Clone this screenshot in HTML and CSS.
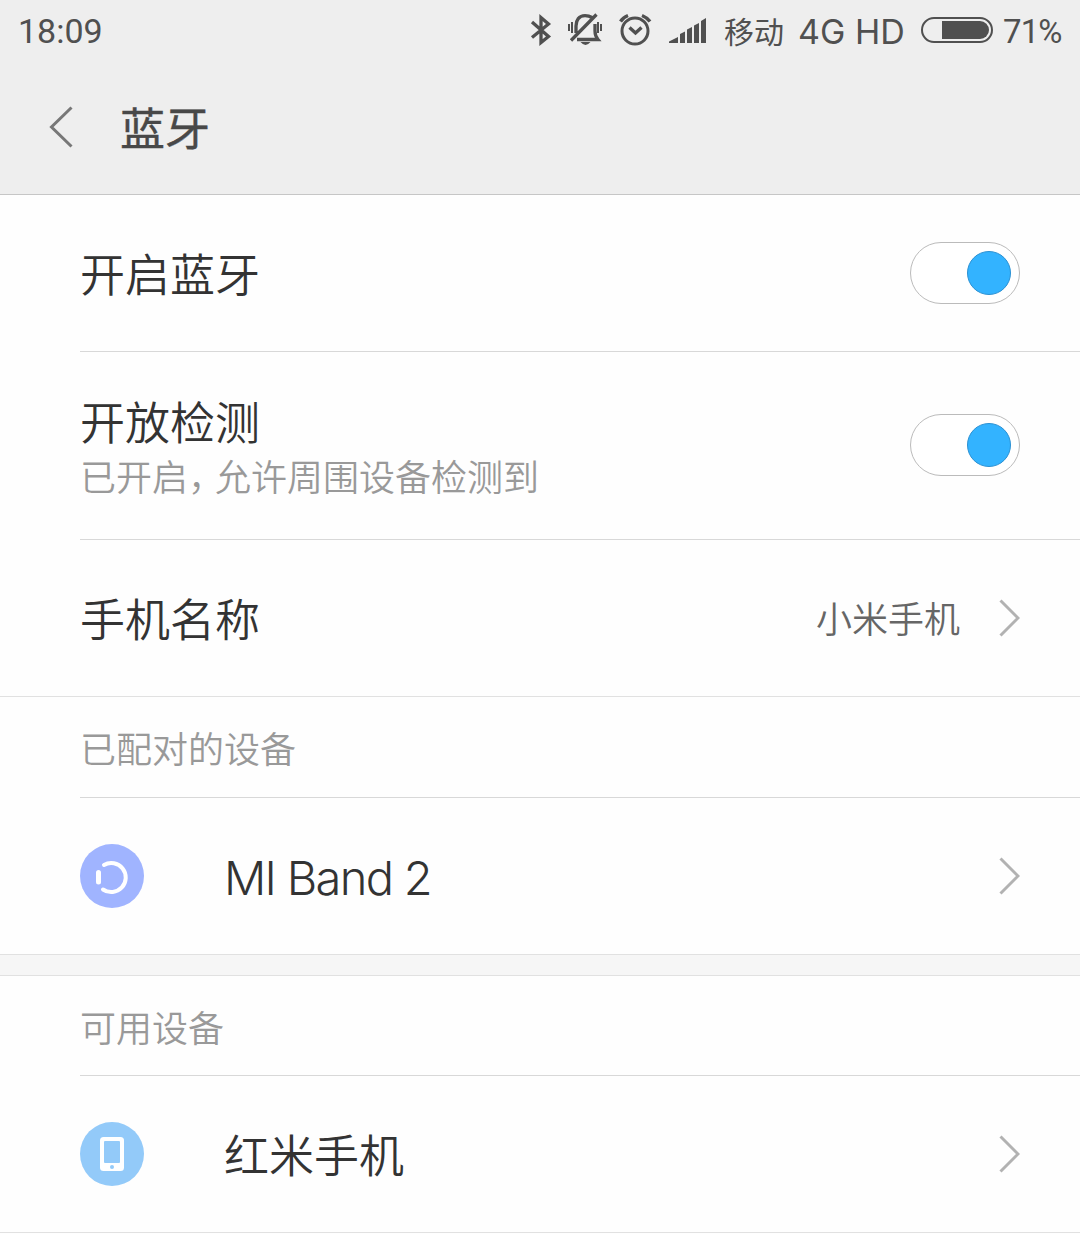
FILE: index.html
```html
<!DOCTYPE html>
<html lang="zh-CN">
<head>
<meta charset="utf-8">
<title>蓝牙</title>
<link rel="stylesheet" href="styles.css">
</head>
<body>
<header class="header">
  <div class="status">
    <span class="clock">18:09</span>
    <svg class="status-icons" width="190" height="60" viewBox="0 0 190 60" fill="none" stroke="#505050" stroke-width="3">
      <path stroke-width="3.300" d="M2 22 18.500 36.500 11 42.500V17.500L18.500 24 2 37.500"/>
      <path stroke-width="3.300" d="M46 33V26C46 20 49 15.700 55 15.700Q59 15.700 62 17.500M65 24V31Q65 36 68 39.500H47M41 40.500 66.500 14.500"/>
      <path stroke-width="2" d="M39 24v7M42 22v11M68 22v11M71 24v7"/>
      <path d="M50.500 42H60.500Q55.500 48 50.500 42Z" fill="#505050" stroke="none"/>
      <circle cx="105" cy="31" r="13"/>
      <path stroke-width="3.400" d="M99.500 27.500 105.500 33 111.500 27.500"/>
      <path stroke-width="3.400" d="M90.500 21.500Q93 17.500 98 15.500M112 15.500Q117 17.500 120 21.500"/>
      <path fill="#505050" stroke="none" d="M139 41.500 148 37V43H139ZM150 34 155 31.500V43H150ZM157 29.500 162 27V43H157ZM164 25.500 169 23V43H164ZM171 21 176 18V43H171Z"/>
    </svg>
    <span class="carrier">移动</span>
    <span class="network">4G HD</span>
    <span class="battery"><span class="battery-level"></span></span>
    <span class="percent">71%</span>
  </div>
  <div class="titlebar">
    <svg class="back" width="26" height="42" viewBox="0 0 26 42" fill="none" stroke="#777" stroke-width="3"><path d="M23.500 1.500 3.500 21 23.500 40.500"/></svg>
    <h1 class="title">蓝牙</h1>
  </div>
</header>
<main>
  <div class="row">
    <div class="label">开启蓝牙</div>
    <div class="switch"><span class="knob"></span></div>
  </div>
  <div class="row row-tall">
    <div class="texts">
      <div class="label">开放检测</div>
      <div class="note">已开启<span class="comma">，</span>允许周围设备检测到</div>
    </div>
    <div class="switch"><span class="knob"></span></div>
  </div>
  <div class="row row-last">
    <div class="label">手机名称</div>
    <div class="value">小米手机</div>
    <svg class="chevron" width="22" height="38" viewBox="0 0 22 38"><path d="M2.500 1.500 20 19 2.500 36.500"/></svg>
  </div>
  <h2 class="section">已配对的设备</h2>
  <div class="row row-last">
    <svg class="device" width="64" height="64" viewBox="0 0 64 64" fill="none" stroke="#fff" stroke-linecap="round">
      <circle cx="32" cy="32" r="32" fill="#a0b4ff" stroke="none"/>
      <path stroke-width="4" d="M24 21A14.500 14.500 0 1 1 23 45.500"/>
      <path stroke-width="5" d="M18.500 28.500V38"/>
    </svg>
    <div class="label latin">MI Band 2</div>
    <svg class="chevron" width="22" height="38" viewBox="0 0 22 38"><path d="M2.500 1.500 20 19 2.500 36.500"/></svg>
  </div>
  <div class="gap"></div>
  <h2 class="section section-second">可用设备</h2>
  <div class="row row-last">
    <svg class="device" width="64" height="64" viewBox="0 0 64 64">
      <circle cx="32" cy="32" r="32" fill="#93caf9"/>
      <rect x="20" y="15" width="24" height="34" rx="3.500" fill="#fff"/>
      <rect x="24" y="19" width="16" height="22" rx="1" fill="#93caf9"/>
      <circle cx="32" cy="45" r="2" fill="#93caf9"/>
    </svg>
    <div class="label">红米手机</div>
    <svg class="chevron" width="22" height="38" viewBox="0 0 22 38"><path d="M2.500 1.500 20 19 2.500 36.500"/></svg>
  </div>
</main>
</body>
</html>
```

FILE: styles.css
```css
* { box-sizing: border-box; }
body {
  margin: 0;
  height: 1234px;
  overflow: hidden;
  background: #fefefe;
  color: #333;
  font-family: "Noto Sans CJK SC", sans-serif;
  font-weight: 350;
}
.header {
  height: 195px;
  background: #eee;
  border-bottom: 1px solid #c6c6c6;
}
.status {
  display: flex;
  align-items: center;
  height: 60px;
  padding: 0 18px;
  color: #505050;
  font: 400 34px/60px Roboto, "Noto Sans CJK SC", sans-serif;
  white-space: nowrap;
}
.clock { padding-top: 2px; }
.status-icons { position: absolute; left: 530px; top: 0; }
.carrier {
  margin-left: auto;
  width: 74px;
  font: 400 30px/60px "Noto Sans CJK SC", sans-serif;
}
.network {
  width: 123px;
  padding-top: 3px;
  font-family: Inter, sans-serif;
}
.battery {
  width: 72px;
  height: 26px;
  padding: 2px;
  border: 2px solid #505050;
  border-radius: 13px;
  display: flex;
  justify-content: flex-end;
}
.battery-level {
  width: 47px;
  background: #505050;
  border-radius: 0 9px 9px 0;
}
.percent {
  width: 59px;
  margin-left: 10px;
  padding-top: 3px;
  font-size: 33px;
  letter-spacing: -.9px;
}
.titlebar {
  display: flex;
  align-items: center;
  height: 134px;
  padding-left: 48px;
}
.title {
  margin: 0 0 0 46px;
  color: #484848;
  font-size: 45px;
  font-weight: 400;
  line-height: 60px;
  -webkit-text-stroke: .4px #484848;
}
.row {
  display: flex;
  align-items: center;
  height: 157px;
  margin-left: 80px;
  padding-right: 60px;
  border-bottom: 1px solid #d8d8d8;
}
.row-tall { height: 188px; padding-bottom: 2px; }
.row-last {
  margin-left: 0;
  padding-left: 80px;
  border-color: #e1e1e1;
}
.label { font-size: 45px; line-height: 60px; }
.note {
  color: #999;
  font-size: 36px;
  line-height: 48px;
}
.comma { margin-right: 9px; font-feature-settings: "halt"; }
.switch {
  width: 110px;
  height: 62px;
  margin-left: auto;
  padding: 8px;
  display: flex;
  justify-content: flex-end;
  border: 1px solid #bbb;
  border-radius: 31px;
  background: #fff;
}
.knob {
  width: 44px;
  height: 44px;
  border: 1px solid #2b91d3;
  border-radius: 50%;
  background: #33b3ff;
}
.value {
  margin-left: auto;
  margin-right: 38px;
  padding-bottom: 2px;
  color: #666;
  font-size: 36px;
  line-height: 48px;
}
.chevron {
  flex: none;
  fill: none;
  stroke: #b2b2b2;
  stroke-width: 3;
}
.device { margin-right: 80px; }
.device ~ .chevron { margin-left: auto; }
.latin {
  padding-top: 4px;
  font-family: Inter, sans-serif;
  font-weight: 300;
  font-size: 47px;
  letter-spacing: -1.7px;
}
.section {
  height: 101px;
  margin: 0 0 0 80px;
  border-bottom: 1px solid #d8d8d8;
  color: #999;
  font-size: 36px;
  font-weight: 350;
  line-height: 100px;
}
.section-second { height: 100px; }
.gap {
  height: 21px;
  background: #f6f6f6;
  border-bottom: 1px solid #e1e1e1;
}
```
